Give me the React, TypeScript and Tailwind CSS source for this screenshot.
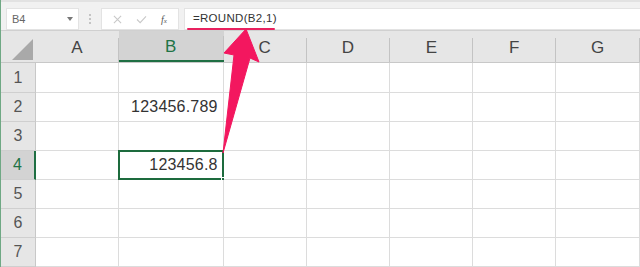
import React from 'react';

const cols = ['A', 'B', 'C', 'D', 'E', 'F', 'G'];
const widths = ['w-[83px]', 'w-[105px]', 'w-[83px]', 'w-[84px]', 'w-[83px]', 'w-[83px]', 'w-[84px]'];
const rows = [1, 2, 3, 4, 5, 6, 7];

const values: Record<string, string> = {
  B2: '123456.789',
  B4: '123456.8',
};

function Toolbar() {
  return (
    <div className="h-[31px] bg-[#f1f1f1] border-t-2 border-[#e2e2e2] border-b border-b-[#d0d0d0] flex items-start pt-[6px]">
      {/* name box */}
      <div className="ml-[5px] w-[73px] h-[22px] bg-white border border-[#e3e3e3] flex items-center justify-between px-[5px]">
        <span className="text-[11px] text-[#666]">B4</span>
        <span className="w-0 h-0 border-l-[3px] border-r-[3px] border-t-[4px] border-l-transparent border-r-transparent border-t-[#777]" />
      </div>
      <div className="w-[22px] h-[22px] flex flex-col items-center justify-center gap-[2px]">
        <span className="w-[2px] h-[2px] bg-[#c4c4c4]" />
        <span className="w-[2px] h-[2px] bg-[#c4c4c4]" />
        <span className="w-[2px] h-[2px] bg-[#c4c4c4]" />
      </div>
      {/* cancel / enter / fx */}
      <div className="w-[78px] h-[22px] bg-white border border-[#e3e3e3] flex items-center justify-around px-[4px]">
        <svg width="9" height="9" viewBox="0 0 10 10">
          <path d="M1 1L9 9M9 1L1 9" stroke="#c8c8c8" strokeWidth="1.2" fill="none" />
        </svg>
        <svg width="11" height="9" viewBox="0 0 12 10">
          <path d="M1 5L4.5 8.5L11 1.5" stroke="#c8c8c8" strokeWidth="1.2" fill="none" />
        </svg>
        <span className="text-[10px] italic text-[#555] font-['Liberation_Serif',serif]">
          f<span className="text-[7px]">x</span>
        </span>
      </div>
      {/* formula box */}
      <div className="ml-[5px] flex-1 h-[22px] bg-white border-y border-l border-[#e3e3e3] flex items-center pl-[8px] relative">
        <span className="text-[11.5px] text-[#333] tracking-[0.3px]">=ROUND(B2,1)</span>
        <span className="absolute left-[2px] top-[19px] w-[88px] h-[2px] bg-[#e8215f] rounded-full" />
      </div>
    </div>
  );
}

function HeaderRow() {
  return (
    <div className="flex h-[32px] bg-[#e6e6e6] border-b border-[#c8c8c8]">
      <div className="w-[35px] relative flex items-end justify-end pr-[2px] pb-[1px]">
        <svg width="22" height="22" viewBox="0 0 22 22">
          <path d="M21 0L21 21L0 21Z" fill="#a9a9a9" />
        </svg>
      </div>
      {cols.map((c, i) => {
        const active = c === 'B';
        return (
          <div
            key={c}
            className={`${widths[i]} flex items-stretch ${active ? 'bg-[#d3d3d3] border-b-2 border-[#1f6f43]' : ''}`}
          >
            <div
              className={`flex-1 flex items-center justify-center pt-[2px] text-[17px] ${active ? 'text-[#217346]' : 'text-[#444]'}`}
            >
              {c}
            </div>
            <div className="w-px self-end h-[24px] bg-[#c3c3c3]" />
          </div>
        );
      })}
    </div>
  );
}

function GridRow({ r }: { r: number }) {
  const activeRow = r === 4;
  return (
    <div className={`flex ${r === 1 ? 'h-[30px]' : 'h-[29px]'}`}>
      <div
        className={`w-[35px] flex items-center justify-center text-[16px] border-b border-[#cfcfcf] ${
          activeRow
            ? 'bg-[#d3d3d3] text-[#217346] border-r-2 border-r-[#1f6f43]'
            : 'bg-[#e6e6e6] text-[#555] border-r border-r-[#c8c8c8]'
        }`}
      >
        {r}
      </div>
      {cols.map((c, i) => {
        const id = `${c}${r}`;
        const active = id === 'B4';
        return (
          <div
            key={id}
            className={`${widths[i]} relative bg-white border-r border-b border-[#dcdcdc] flex items-center justify-end pr-[5px] text-[16px] text-[#333] tracking-[0.2px]`}
          >
            {values[id]}
            {active && (
              <>
                <span className="absolute -left-px -top-px -right-px -bottom-px border-2 border-[#1d6b3d]" />
                <span className="absolute -right-[4px] -bottom-[4px] w-[6px] h-[6px] bg-[#1d6b3d] border border-white" />
              </>
            )}
          </div>
        );
      })}
    </div>
  );
}

export default function App() {
  return (
    <div className="relative w-[640px] h-[267px] overflow-hidden bg-white border-l border-[#6fa884] font-['Liberation_Sans',Arial,sans-serif]">
      <Toolbar />
      <HeaderRow />
      {rows.map((r) => (
        <GridRow key={r} r={r} />
      ))}
      {/* annotation arrow */}
      <svg className="absolute left-0 top-0 pointer-events-none" width="640" height="267">
        <path
          d="M245 29 L258 62 L249 58 L222 153 L233 55 L223 53 Z"
          fill="#f3175f"
          stroke="#f3175f"
          strokeWidth="1"
          strokeLinejoin="round"
        />
      </svg>
    </div>
  );
}
